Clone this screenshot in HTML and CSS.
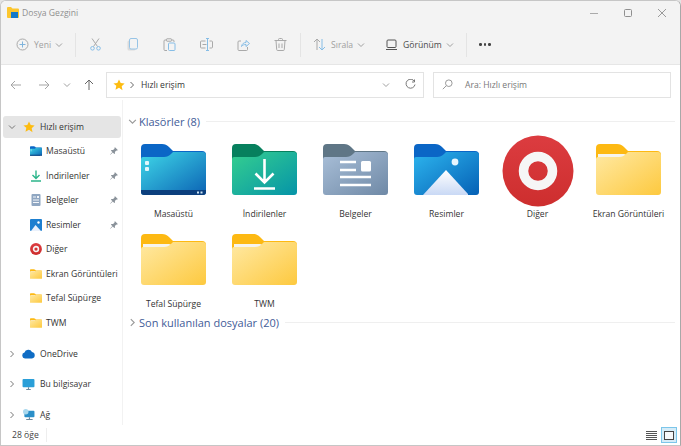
FILE: index.html
```html
<!DOCTYPE html>
<html lang="tr">
<head>
<meta charset="utf-8">
<title>Dosya Gezgini</title>
<link rel="stylesheet" href="styles.css">
</head>
<body>
<svg class="defs" width="0" height="0" aria-hidden="true">
  <defs>
    <linearGradient id="gDesk" x1="0" y1="0" x2="1" y2="1"><stop offset="0" stop-color="#3fd8e8"/><stop offset="1" stop-color="#0b62b4"/></linearGradient>
    <linearGradient id="gDown" x1="0" y1="0" x2="1" y2="1"><stop offset="0" stop-color="#35cf8f"/><stop offset="1" stop-color="#0594a8"/></linearGradient>
    <linearGradient id="gDocs" x1="0" y1="0" x2="1" y2="1"><stop offset="0" stop-color="#a9bfd8"/><stop offset="1" stop-color="#6f89a6"/></linearGradient>
    <linearGradient id="gPics" x1="0" y1="0" x2="1" y2="1"><stop offset="0" stop-color="#2db5ee"/><stop offset="1" stop-color="#0560b5"/></linearGradient>
    <linearGradient id="gYel" x1="0" y1="0" x2="1" y2="1"><stop offset="0" stop-color="#ffe9a3"/><stop offset="1" stop-color="#fdc93f"/></linearGradient>
    <linearGradient id="gMount" x1="0" y1="0" x2="0" y2="1"><stop offset="0" stop-color="#ffffff"/><stop offset="1" stop-color="#c9d9f5"/></linearGradient>
    <linearGradient id="gRed" x1="0" y1="0" x2="0" y2="1"><stop offset="0" stop-color="#dc3c40"/><stop offset="1" stop-color="#cd2e2e"/></linearGradient>
    <symbol id="fDesk" viewBox="0 0 65 51">
      <path d="M0 4a4 4 0 0 1 4-4h17c3 0 5 1 7 3l4 4h29a4 4 0 0 1 4 4v20H0z" fill="#0b66c6"/>
      <path d="M0 15a2 2 0 0 1 2-2h21c3 0 5-1 7-3l2-2h30a3 3 0 0 1 3 3v37a3 3 0 0 1-3 3H3a3 3 0 0 1-3-3z" fill="url(#gDesk)"/>
      <path d="M0 46h65v2a3 3 0 0 1-3 3H3a3 3 0 0 1-3-3z" fill="#0c3f7d"/>
      <rect x="4" y="17" width="4" height="4" rx="1" fill="#dff6fb"/><rect x="4" y="23" width="4" height="4" rx="1" fill="#dff6fb"/>
      <rect x="56" y="47.500" width="2" height="2" fill="#cfe6f5"/><rect x="59.500" y="47.500" width="2" height="2" fill="#cfe6f5"/>
    </symbol>
    <symbol id="fDown" viewBox="0 0 65 51">
      <path d="M0 4a4 4 0 0 1 4-4h17c3 0 5 1 7 3l4 4h29a4 4 0 0 1 4 4v20H0z" fill="#07805e"/>
      <path d="M0 15a2 2 0 0 1 2-2h21c3 0 5-1 7-3l2-2h30a3 3 0 0 1 3 3v37a3 3 0 0 1-3 3H3a3 3 0 0 1-3-3z" fill="url(#gDown)"/>
      <path d="M32.500 15v23M23.500 29.500l9 9 9-9M22 44.500h21" fill="none" stroke="#fff" stroke-width="2.600"/>
    </symbol>
    <symbol id="fDocs" viewBox="0 0 65 51">
      <path d="M0 4a4 4 0 0 1 4-4h17c3 0 5 1 7 3l4 4h29a4 4 0 0 1 4 4v20H0z" fill="#5f7686"/>
      <path d="M0 15a2 2 0 0 1 2-2h21c3 0 5-1 7-3l2-2h30a3 3 0 0 1 3 3v37a3 3 0 0 1-3 3H3a3 3 0 0 1-3-3z" fill="url(#gDocs)"/>
      <path d="M17 18h16M17 26h16M17 33h31M17 41h31" stroke="#fff" stroke-width="2.400" fill="none"/>
      <rect x="38" y="17" width="10" height="10.500" rx="1.500" fill="#fff"/>
    </symbol>
    <symbol id="fPics" viewBox="0 0 65 51">
      <path d="M0 4a4 4 0 0 1 4-4h17c3 0 5 1 7 3l4 4h29a4 4 0 0 1 4 4v20H0z" fill="#0b66c6"/>
      <path d="M0 15a2 2 0 0 1 2-2h21c3 0 5-1 7-3l2-2h30a3 3 0 0 1 3 3v37a3 3 0 0 1-3 3H3a3 3 0 0 1-3-3z" fill="url(#gPics)"/>
      <path d="M9 51l23-25 22 24v1z" fill="url(#gMount)"/>
      <circle cx="41" cy="18" r="3.400" fill="#e8f5fd"/>
    </symbol>
    <symbol id="fYel" viewBox="0 0 65 51">
      <path d="M0 4a4 4 0 0 1 4-4h17c3 0 5 1 7 3l4 4h29a4 4 0 0 1 4 4v20H0z" fill="#fdb913"/>
      <path d="M2 10h26l3 1-4 5H2z" fill="#f6f4ee"/>
      <path d="M0 15a2 2 0 0 1 2-2h21c3 0 5-1 7-3l2-2h30a3 3 0 0 1 3 3v37a3 3 0 0 1-3 3H3a3 3 0 0 1-3-3z" fill="url(#gYel)"/>
    </symbol>
    <symbol id="target" viewBox="0 0 72 72">
      <circle cx="36" cy="36" r="35.500" fill="url(#gRed)"/>
      <circle cx="36" cy="36" r="14.500" fill="none" stroke="#f6f6f6" stroke-width="9.500"/>
    </symbol>
    <symbol id="star" viewBox="0 0 12 12">
      <path d="M6 .5l1.700 3.600 3.900.5-2.900 2.700.8 3.900L6 8.800l-3.500 1.900.8-3.900L.4 4.600l3.900-.5z" fill="#fdbc11"/>
    </symbol>
    <symbol id="pin" viewBox="0 0 8 8">
      <path d="M5 .2L7.800 3 7 3.700 6.300 3.400 4.900 5l.1 1.500-.7.600L2.800 5.500.5 7.700.2 7.400 2.400 5 .9 3.700l.6-.7L3 3.100 4.600 1.700 4.300 1z" fill="#8a929a"/>
    </symbol>
    <symbol id="chev" viewBox="0 0 8 8">
      <path d="M1 2.500l3 3 3-3" fill="none" stroke="currentColor" stroke-width="1"/>
    </symbol>
    <symbol id="chevr" viewBox="0 0 8 8">
      <path d="M2.500 1l3 3-3 3" fill="none" stroke="currentColor" stroke-width="1"/>
    </symbol>
  </defs>
</svg>
<div class="window">
  <header class="titlebar">
    <svg class="app-icon" viewBox="0 0 12 11"><path d="M0 1a1 1 0 0 1 1-1h3l1.500 1.500H11a1 1 0 0 1 1 1V10a1 1 0 0 1-1 1H1a1 1 0 0 1-1-1z" fill="#fcc62d"/><rect x="4" y="5" width="7" height="6" fill="#1479c9"/></svg>
    <span class="title">Dosya Gezgini</span>
    <div class="winctl">
      <svg viewBox="0 0 10 10" class="wc"><path d="M1 5.500h8" stroke="#aaa" fill="none"/></svg>
      <svg viewBox="0 0 10 10" class="wc"><rect x="1.500" y="1.500" width="7" height="7" rx="1" stroke="#8f8f8f" fill="none"/></svg>
      <svg viewBox="0 0 10 10" class="wc"><path d="M1 1l8 8M9 1l-8 8" stroke="#9a9a9a" fill="none"/></svg>
    </div>
  </header>

  <div class="cmdbar">
    <div class="cmd cmd-new">
      <svg class="ti" viewBox="0 0 13 13"><circle cx="6.500" cy="6.500" r="5.500" fill="none" stroke="#a9a9a9"/><path d="M6.500 3.500v6M3.500 6.500h6" stroke="#7fb4dc"/></svg>
      <span class="cmd-text">Yeni</span>
      <svg class="cv"><use href="#chev"/></svg>
    </div>
    <span class="sep"></span>
    <div class="cmd-icons">
      <svg class="ti" viewBox="0 0 13 13"><path d="M3 .5l5.500 8M10 .5l-5.500 8" stroke="#a9a9a9" fill="none"/><circle cx="3.500" cy="10.300" r="1.800" fill="none" stroke="#86bde6"/><circle cx="9.500" cy="10.300" r="1.800" fill="none" stroke="#86bde6"/></svg>
      <svg class="ti" viewBox="0 0 13 13"><rect x="1.500" y="2.500" width="8" height="10" rx="1.500" fill="#dcdcdc"/><rect x="3.500" y=".5" width="8" height="10.500" rx="1.500" fill="#f3f3f3" stroke="#97c4e6"/></svg>
      <svg class="ti" viewBox="0 0 13 13"><path d="M3.500 2H2a1 1 0 0 0-1 1v8.500a1 1 0 0 0 1 1h2M9 2h1a1 1 0 0 1 1 1v1" fill="none" stroke="#a9a9a9"/><rect x="3.500" y=".8" width="5" height="2.400" rx=".5" fill="none" stroke="#a9a9a9"/><rect x="5.500" y="5" width="6.500" height="7.500" rx="1" fill="none" stroke="#86bde6"/></svg>
      <svg class="ti" viewBox="0 0 13 13"><path d="M5.500 3H1.500a1 1 0 0 0-1 1v5a1 1 0 0 0 1 1h4M9.500 3h2a1 1 0 0 1 1 1v5a1 1 0 0 1-1 1h-2" fill="none" stroke="#a9a9a9"/><path d="M2.500 6.500h4" stroke="#a9a9a9"/><path d="M7.500 .5v12M6 .5h3M6 12.500h3" stroke="#86bde6" fill="none"/></svg>
      <svg class="ti" viewBox="0 0 13 13"><path d="M4 3H2a1 1 0 0 0-1 1v7.500a1 1 0 0 0 1 1h7.500a1 1 0 0 0 1-1V9" fill="none" stroke="#a9a9a9"/><path d="M4.500 8.500C5 5.500 7 4.500 9 4.500V2.500l3.500 3-3.500 3V6.500C7 6.500 5.500 7 4.500 8.500z" fill="none" stroke="#86bde6"/></svg>
      <svg class="ti" viewBox="0 0 13 13"><path d="M.5 2.500h12M4.500 2.500v-1a1 1 0 0 1 1-1h2a1 1 0 0 1 1 1v1M2 2.500l.7 9a1 1 0 0 0 1 1h5.600a1 1 0 0 0 1-1l.7-9M5 5.500v4.500M8 5.500v4.500" fill="none" stroke="#a9a9a9"/></svg>
    </div>
    <span class="sep"></span>
    <div class="cmd cmd-sort">
      <svg class="ti" viewBox="0 0 13 13"><path d="M4 12V1M1 4l3-3 3 3" fill="none" stroke="#a9a9a9"/><path d="M9 1v11M6 9l3 3 3-3" fill="none" stroke="#86bde6"/></svg>
      <span class="cmd-text">Sırala</span>
      <svg class="cv"><use href="#chev"/></svg>
    </div>
    <div class="cmd cmd-view">
      <svg class="ti" viewBox="0 0 13 13"><rect x="2" y="2" width="9" height="7.500" rx="1" fill="none" stroke="#555"/><path d="M1 11.500h11" stroke="#555"/></svg>
      <span class="cmd-text cmd-on">Görünüm</span>
      <svg class="cv"><use href="#chev"/></svg>
    </div>
    <span class="sep"></span>
    <div class="more"><i></i><i></i><i></i></div>
  </div>

  <div class="addrrow">
    <div class="navs">
      <svg class="ni" viewBox="0 0 12 12"><path d="M11 6H1M5 2L1 6l4 4" fill="none" stroke="#a5a5a5"/></svg>
      <svg class="ni" viewBox="0 0 12 12"><path d="M1 6h10M7 2l4 4-4 4" fill="none" stroke="#a5a5a5"/></svg>
      <svg class="cv nc"><use href="#chev"/></svg>
      <svg class="ni nu" viewBox="0 0 12 12"><path d="M6 11V1M2 5l4-4 4 4" fill="none" stroke="#666"/></svg>
    </div>
    <div class="addr">
      <svg class="addr-star"><use href="#star"/></svg>
      <svg class="cv addr-gt"><use href="#chevr"/></svg>
      <span class="addr-text">Hızlı erişim</span>
      <svg class="cv addr-dd"><use href="#chev"/></svg>
      <svg class="addr-ref" viewBox="0 0 11 11"><path d="M9.500 2.500A4.500 4.500 0 1 0 10 5.500M9.500 .5v2.500H7" fill="none" stroke="#777"/></svg>
    </div>
    <div class="search">
      <svg class="s-ico" viewBox="0 0 11 11"><circle cx="6.800" cy="4.200" r="3.300" fill="none" stroke="#999"/><path d="M4.300 6.700L.8 10.200" stroke="#999"/></svg>
      <span>Ara: Hızlı erişim</span>
    </div>
  </div>

  <div class="body">
    <nav class="side">
      <div class="row row-sel">
        <svg class="cv tw"><use href="#chev"/></svg>
        <svg class="r-star"><use href="#star"/></svg>
        <span>Hızlı erişim</span>
      </div>
      <div class="row sub"><svg class="si"><use href="#fDesk"/></svg><span>Masaüstü</span><svg class="pin"><use href="#pin"/></svg></div>
      <div class="row sub"><svg class="si" viewBox="0 0 12 12"><path d="M6 .5v7.500M2.500 5L6 8.500 9.500 5" fill="none" stroke="#2bb58a" stroke-width="1.400"/><path d="M1 11h10" stroke="#2bb58a" stroke-width="1.400"/></svg><span>İndirilenler</span><svg class="pin"><use href="#pin"/></svg></div>
      <div class="row sub"><svg class="si" viewBox="0 0 12 12"><rect x="1.500" width="9" height="12" rx="1" fill="#90a7c2"/><path d="M3 3h3M3 6h6M3 8.500h6" stroke="#f3f6fa"/><rect x="7" y="2" width="2" height="2" fill="#f3f6fa"/></svg><span>Belgeler</span><svg class="pin"><use href="#pin"/></svg></div>
      <div class="row sub"><svg class="si" viewBox="0 0 12 12"><rect width="12" height="12" rx="1" fill="#1d7fd0"/><path d="M1 12l4.500-6L11 12z" fill="#eaf1fc"/><circle cx="8.500" cy="3.500" r="1.200" fill="#fff"/></svg><span>Resimler</span><svg class="pin"><use href="#pin"/></svg></div>
      <div class="row sub"><svg class="si"><use href="#target"/></svg><span>Diğer</span></div>
      <div class="row sub"><svg class="si"><use href="#fYel"/></svg><span>Ekran Görüntüleri</span></div>
      <div class="row sub"><svg class="si"><use href="#fYel"/></svg><span>Tefal Süpürge</span></div>
      <div class="row sub"><svg class="si"><use href="#fYel"/></svg><span>TWM</span></div>
      <div class="row top first">
        <svg class="cv tw"><use href="#chevr"/></svg>
        <svg class="r-ico" viewBox="0 0 13 10"><path d="M3 10a3 3 0 0 1-.5-5.900A4 4 0 0 1 10 3.500 3.300 3.300 0 0 1 10 10z" fill="#0f6cc4"/></svg>
        <span>OneDrive</span>
      </div>
      <div class="row top">
        <svg class="cv tw"><use href="#chevr"/></svg>
        <svg class="r-ico" viewBox="0 0 13 12"><rect width="13" height="9" rx="1" fill="#2a9fd8"/><path d="M4 11.500h5M6.500 9v2" stroke="#6b8aa0" stroke-width="1.200"/></svg>
        <span>Bu bilgisayar</span>
      </div>
      <div class="row top">
        <svg class="cv tw"><use href="#chevr"/></svg>
        <svg class="r-ico" viewBox="0 0 13 12"><rect x="2" y="2" width="11" height="7" rx="1" fill="#2a8fc8"/><circle cx="3.500" cy="3" r="3" fill="#a9d8ee"/><path d="M4 11.500h7M7.500 9v2" stroke="#6b8aa0" stroke-width="1.200"/></svg>
        <span>Ağ</span>
      </div>
    </nav>

    <main class="main">
      <div class="group">
        <svg class="cv gtw"><use href="#chev"/></svg>
        <span class="gname">Klasörler (8)</span>
        <span class="gline"></span>
      </div>
      <div class="grid">
        <div class="item"><div class="ibox"><svg class="folder"><use href="#fDesk"/></svg></div><span class="label">Masaüstü</span></div>
        <div class="item"><div class="ibox"><svg class="folder"><use href="#fDown"/></svg></div><span class="label">İndirilenler</span></div>
        <div class="item"><div class="ibox"><svg class="folder"><use href="#fDocs"/></svg></div><span class="label">Belgeler</span></div>
        <div class="item"><div class="ibox"><svg class="folder"><use href="#fPics"/></svg></div><span class="label">Resimler</span></div>
        <div class="item"><div class="ibox"><svg class="bigtarget"><use href="#target"/></svg></div><span class="label">Diğer</span></div>
        <div class="item"><div class="ibox"><svg class="folder"><use href="#fYel"/></svg></div><span class="label">Ekran Görüntüleri</span></div>
        <div class="item"><div class="ibox"><svg class="folder"><use href="#fYel"/></svg></div><span class="label">Tefal Süpürge</span></div>
        <div class="item"><div class="ibox"><svg class="folder"><use href="#fYel"/></svg></div><span class="label">TWM</span></div>
      </div>
      <div class="group">
        <svg class="cv gtw"><use href="#chevr"/></svg>
        <span class="gname">Son kullanılan dosyalar (20)</span>
        <span class="gline"></span>
      </div>
    </main>
  </div>

  <footer class="status">
    <span class="count">28 öğe</span>
    <span class="st-sep"></span>
    <svg class="st-list" viewBox="0 0 11 9"><path d="M0 .5h11M0 2.500h11M0 4.500h11M0 6.500h11M0 8.500h11" stroke="#555"/></svg>
    <span class="st-big"><i></i></span>
  </footer>
</div>
</body>
</html>
```

FILE: styles.css
```css
* { box-sizing: border-box; }
html, body { margin: 0; height: 100%; }
body { width: 681px; height: 446px; overflow: hidden; background: #e4e4e4; font-family: "Open Sans", "Noto Sans", sans-serif; font-size: 8.600px; color: #222; }
.defs { position: absolute; }
svg { display: block; flex: none; }
.window { width: 681px; height: 446px; display: flex; flex-direction: column; background: #fff; border: 1px solid #c6c6c6; border-right-color: #a8a8a8; border-radius: 6px 6px 0 0; overflow: hidden; }

.titlebar { height: 26px; flex: none; display: flex; align-items: center; background: #f3f3f3; padding-left: 6px; }
.app-icon { width: 12px; height: 11px; margin-right: 3px; margin-top: -3px; }
.title { color: #8f8f8f; margin-top: -3px; }
.winctl { margin-left: auto; display: flex; gap: 24px; padding-right: 13px; margin-top: -3px; }
.wc { width: 10px; height: 10px; }

.cmdbar { height: 38px; flex: none; display: flex; align-items: center; background: #f3f3f3; border-bottom: 1px solid #e6e6e6; padding: 0 0 2px 15px; }
.cmd { display: flex; align-items: center; color: #a0a0a0; }
.ti { width: 13px; height: 13px; }
.cmd-text { margin-left: 5px; }
.cmd-on { color: #4a4a4a; }
.cv { width: 8px; height: 8px; color: #a0a0a0; }
.cmd .cv { margin-left: 4px; }
.sep { width: 1px; height: 24px; background: #e4e4e4; }
.cmd-new { width: 59px; }
.cmd-icons { width: 224px; display: flex; gap: 24px; padding-left: 13px; }
.cmd-sort { width: 72px; padding-left: 12px; }
.cmd-view { width: 93px; padding-left: 12px; }
.more { display: flex; gap: 2px; margin-left: 12px; }
.more i { width: 2.500px; height: 2.500px; border-radius: 50%; background: #444; }

.addrrow { height: 35px; flex: none; display: flex; align-items: center; padding-top: 4px; }
.navs { width: 105px; display: flex; align-items: center; padding-left: 9px; }
.ni { width: 12px; height: 12px; margin-right: 16px; }
.nc { margin-left: -3px; margin-right: 12px; }
.nu { margin-right: 0; }
.addr { width: 318px; height: 26px; display: flex; align-items: center; background: #fff; border: 1px solid #e3e3e3; padding: 0 7px 0 6px; color: #333; }
.addr-star { width: 12px; height: 12px; }
.addr-gt { margin: 0 5px 0 3px; color: #666; }
.addr-text { flex: 1; color: #333; }
.addr-dd { margin-right: 15px; }
.addr-ref { width: 11px; height: 11px; }
.search { width: 238px; height: 26px; margin-left: 9px; display: flex; align-items: center; border: 1px solid #e3e3e3; padding-left: 8px; color: #777; }
.s-ico { width: 11px; height: 11px; margin-right: 12px; }

.body { flex: 1; display: flex; min-height: 0; }
.side { width: 122px; flex: none; padding: 16px 0 0 2px; color: #333; border-right: 1px solid #f2f2f2; }
.row { height: 22px; margin-bottom: 2.450px; display: flex; align-items: center; width: 118px; padding-left: 5px; }
.row-sel { background: #e5e5e5; border-radius: 3px; }
.tw { width: 8px; height: 8px; color: #777; }
.r-star { width: 12px; height: 12px; margin: 0 5px 0 7px; }
.r-ico { width: 13px; height: 11px; margin: 0 5px 0 6px; }
.sub { padding-left: 27px; }
.si { width: 12px; height: 12px; margin-right: 4px; }
.pin { width: 8px; height: 8px; margin-left: auto; margin-right: 3px; }
.first { margin-top: 9px; }
.top { margin-bottom: 8.500px; }

.main { flex: 1; padding: 14px 5px 0 5px; min-width: 0; }
.group { display: flex; align-items: center; height: 14px; color: #3f5c98; }
.gtw { width: 9px; height: 9px; color: #999; margin-right: 2px; }
.gname { font-size: 11px; color: #3f5c98; white-space: nowrap; }
.gline { flex: 1; height: 1px; background: #efefef; margin-left: 6px; margin-top: 1px; }
.grid { display: grid; grid-template-columns: repeat(6, 91px); grid-auto-rows: 89.500px; margin: 7px 0 1px; }
.item { display: flex; flex-direction: column; align-items: center; }
.ibox { height: 72px; display: flex; align-items: center; justify-content: center; flex: none; }
.folder { width: 65px; height: 51px; margin-bottom: 3px; }
.bigtarget { width: 72px; height: 72px; }
.label { line-height: 14px; white-space: nowrap; color: #333; }

.status { height: 20px; flex: none; display: flex; align-items: center; padding: 0 3px 0 11px; color: #444; }
.count { width: 34px; }
.st-sep { width: 1px; height: 14px; background: #eee; }
.st-list { width: 11px; height: 9px; margin-left: auto; margin-right: 4px; }
.st-big { width: 16px; height: 16px; border: 1px solid #7cc6ea; background: #d5ecf8; display: flex; align-items: center; justify-content: center; }
.st-big i { width: 10px; height: 9px; border: 1px solid #444; background: #f6f8fa; }
```
